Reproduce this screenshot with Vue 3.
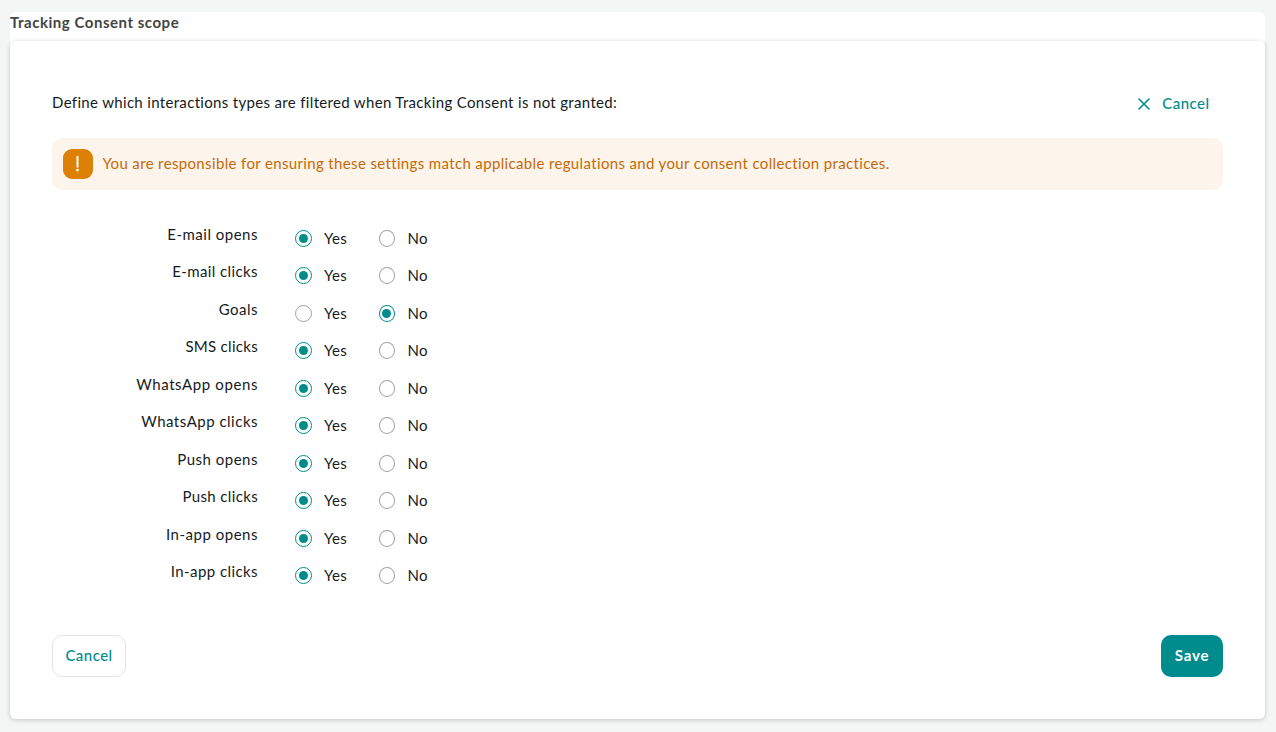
<template>
<div class="page">
<div class="panel">
    <h2 class="panel-title">Tracking Consent scope</h2>

    <div class="card">
        <div class="card-header">
            <div class="intro">Define which interactions types are filtered when Tracking Consent is not granted:</div>
            <button class="link-cancel" type="button">
                <svg width="12" height="12" viewBox="0 0 12 12">
                    <path d="M1 1 L11 11 M11 1 L1 11" fill="none" stroke="currentColor" stroke-width="1.6" stroke-linecap="round" />
                </svg>
                <span class="cancel-label">Cancel</span>
            </button>
        </div>

        <div class="alert">
            <div class="alert-icon">
                <svg width="30" height="30" viewBox="0 0 30 30">
                    <path d="M14.5 7.8 V17.8" fill="none" stroke="#fff" stroke-width="2" stroke-linecap="round" />
                    <circle cx="14.5" cy="21.1" r="1.3" fill="#fff" />
                </svg>
            </div>
            <div class="alert-text">You are responsible for ensuring these settings match applicable regulations and your consent collection practices.</div>
        </div>

        <div class="options">
            <div class="option" v-for="option in options" :key="option.label">
                <div class="option-label"><span :style="{ letterSpacing: option.spacing + 'px' }">{{ option.label }}</span></div>
                <div class="choice choice-yes" @click="option.value = true">
                    <span class="radio" :class="{ 'radio-active': option.value }"></span>
                    <span class="choice-text">Yes</span>
                </div>
                <div class="choice" @click="option.value = false">
                    <span class="radio" :class="{ 'radio-active': !option.value }"></span>
                    <span class="choice-text">No</span>
                </div>
            </div>
        </div>

        <div class="actions">
            <button class="btn btn-cancel" type="button"><span class="cancel-label">Cancel</span></button>
            <button class="btn btn-save" type="button">Save</button>
        </div>
    </div>
</div>
</div>
</template>

<script setup>
import { ref } from 'vue'

const options = ref([
    { label: 'E-mail opens', value: true, spacing: 0.5 },
    { label: 'E-mail clicks', value: true, spacing: 0.4 },
    { label: 'Goals', value: false, spacing: 0.5 },
    { label: 'SMS clicks', value: true, spacing: 0.3 },
    { label: 'WhatsApp opens', value: true, spacing: 0.6 },
    { label: 'WhatsApp clicks', value: true, spacing: 0.5 },
    { label: 'Push opens', value: true, spacing: 0.5 },
    { label: 'Push clicks', value: true, spacing: 0.36 },
    { label: 'In-app opens', value: true, spacing: 0.52 },
    { label: 'In-app clicks', value: true, spacing: 0.42 },
])
</script>

<style>
body {
    background-color: #f4f6f6;
}
</style>

<style scoped>
.page {
    box-sizing: border-box;
    min-height: 100vh;
    padding: 12px 11px 0 10px;
    background-color: #f4f6f6;
}

.panel {
    background-color: #fff;
    border-radius: 6px;
    font-family: Lato, "Open Sans", sans-serif;
    font-size: 15px;
    color: #161b22;
}

.panel-title {
    margin: 0;
    height: 29px;
    line-height: 20px;
    font-size: 15px;
    font-weight: 700;
    letter-spacing: .53px;
    color: #444;
}

.card {
    box-sizing: border-box;
    height: 677.5px;
    padding: 48px 42px 0;
    background-color: #fff;
    border-radius: 6px;
    box-shadow: 0 1px 5px rgba(0, 0, 0, .2);
}

.card-header {
    display: flex;
    justify-content: space-between;
    align-items: center;
    height: 30px;
    margin-bottom: 19px;
}

.intro {
    letter-spacing: .33px;
    line-height: 26px;
    padding-bottom: 4px;
    white-space: nowrap;
}

.link-cancel {
    display: flex;
    align-items: center;
    gap: 12px;
    padding: 0 13.5px 0 0;
    border: 0;
    background: none;
    color: #008c8c;
    font: inherit;
    cursor: pointer;
}

.cancel-label {
    padding-bottom: 2px;
    letter-spacing: .45px;
    font-weight: 500;
}

.alert {
    box-sizing: border-box;
    display: flex;
    align-items: center;
    gap: 9.5px;
    height: 52px;
    padding: 0 11px;
    border-radius: 10px;
    background-color: #fdf4eb;
    color: #c66a05;
}

.alert-icon {
    width: 30px;
    height: 30px;
    border-radius: 9px;
    background-color: #dc8106;
}

.alert-icon svg {
    display: block;
}

.alert-text {
    padding-bottom: 2px;
    letter-spacing: .354px;
    white-space: nowrap;
}

.options {
    margin-top: 30px;
}

.option {
    display: flex;
    height: 37.5px;
}

.option-label {
    width: 206px;
    margin-top: -.4px;
    margin-right: 37px;
    line-height: 28px;
    text-align: right;
    white-space: nowrap;
}

.choice {
    display: flex;
    align-items: center;
    height: 36.8px;
    cursor: pointer;
}

.choice-yes {
    width: 83.5px;
}

.radio {
    box-sizing: border-box;
    display: flex;
    align-items: center;
    justify-content: center;
    width: 17px;
    height: 17px;
    margin-right: 12px;
    border: 1px solid #a0a0a0;
    border-radius: 50%;
}

.choice-yes + .choice .radio {
    width: 16.5px;
    margin-right: 12.5px;
}

.radio-active {
    border-color: #008c8c;
}

.radio-active::after {
    content: "";
    width: 9px;
    height: 9px;
    border-radius: 50%;
    background-color: #008c8c;
}

.choice-text {
    padding-bottom: 1px;
    line-height: 20px;
    letter-spacing: .3px;
}

.actions {
    display: flex;
    justify-content: space-between;
    margin-top: 40px;
}

.btn {
    box-sizing: border-box;
    height: 42px;
    padding: 0 0 2px;
    border-radius: 10px;
    font: inherit;
    cursor: pointer;
}

.btn-cancel {
    width: 74px;
    border: 1px solid #e4e6e6;
    background-color: #fff;
    color: #008c8c;
}

.btn-save {
    width: 62px;
    border: 0;
    background-color: #008c8c;
    color: #fff;
    font-weight: 700;
    letter-spacing: .8px;
}
</style>
